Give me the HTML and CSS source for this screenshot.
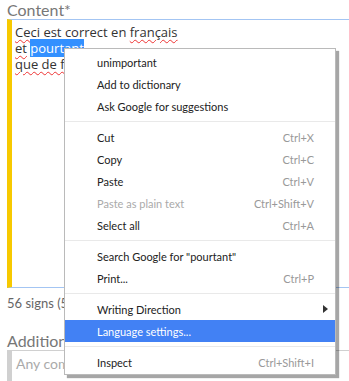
FILE: index.html
```html
<!DOCTYPE html>
<html lang="fr">
<head>
    <meta charset="UTF-8">
    <title>Content</title>
    <link rel="stylesheet" href="styles.css">
</head>
<body>
    <div class="form">
        <div class="field-label">Content*</div>
        <div class="textarea content">
            <div><span class="typo">Ceci</span> est correct en <span class="typo">français</span></div>
            <div><span class="typo">et</span> <span class="selected">pourtant</span></div>
            <div><span class="typo">que de fautes</span></div>
        </div>
        <div class="counter">56 signs (56 characters)</div>
        <div class="field-label">Additional comments</div>
        <div class="textarea comments">
            <span class="placeholder">Any comments</span>
        </div>
    </div>

    <div class="context-menu">
        <div class="item"><span>unimportant</span></div>
        <div class="item"><span>Add to dictionary</span></div>
        <div class="item"><span>Ask Google for suggestions</span></div>
        <div class="separator"></div>
        <div class="item"><span>Cut</span><span class="shortcut">Ctrl+X</span></div>
        <div class="item"><span>Copy</span><span class="shortcut">Ctrl+C</span></div>
        <div class="item"><span>Paste</span><span class="shortcut">Ctrl+V</span></div>
        <div class="item disabled"><span>Paste as plain text</span><span class="shortcut">Ctrl+Shift+V</span></div>
        <div class="item"><span>Select all</span><span class="shortcut">Ctrl+A</span></div>
        <div class="separator"></div>
        <div class="item"><span>Search Google for "pourtant"</span></div>
        <div class="item"><span>Print...</span><span class="shortcut">Ctrl+P</span></div>
        <div class="separator"></div>
        <div class="item"><span>Writing Direction</span><span class="arrow"></span></div>
        <div class="item active"><span>Language settings...</span></div>
        <div class="separator"></div>
        <div class="item"><span>Inspect</span><span class="shortcut">Ctrl+Shift+I</span></div>
    </div>
</body>
</html>
```

FILE: styles.css
```css
body { margin: 0; background-color: #fff; font-family: Lato, "Open Sans", sans-serif; overflow: hidden; }
.form { padding: 0 0 0 7px; }
.field-label { font-size: 16px; line-height: 19px; color: #777; height: 19px; white-space: nowrap; }
.textarea { border: 1px solid #a3c5f3; border-right: none; border-left: 5px solid #f7c900; }
.content { height: 260px; padding: 4px 0 3px 3px; font-family: "Open Sans", sans-serif; font-size: 13px; line-height: 16px; color: #333; }
.typo { text-decoration: underline wavy #e33; text-decoration-thickness: 1px; text-underline-offset: 2px; }
.selected { background-color: #3390ff; color: #fff; }
.counter { margin-top: 7px; font-size: 13px; line-height: 16px; color: #666; }
.counter + .field-label { margin-top: 20px; }
.comments { border-color: #d0d0d0; border-left-color: #d0d0d0; height: 40px; padding: 5px 0 0 4px; font-size: 14px; line-height: 16px; }
.placeholder { color: #aaa; }

/* menu contextuel */
.context-menu { position: absolute; left: 64px; top: 48px; width: 270px; padding: 2px 0 1px; background-color: #fff; border: 1px solid #bababa; box-shadow: 3px 3px 1px rgba(0, 0, 0, 0.35); font-size: 11px; color: #222; }
.item { display: flex; align-items: center; justify-content: space-between; height: 22px; padding: 0 21px 0 32px; white-space: nowrap; }
.shortcut { color: #999; }
.disabled { color: #aaa; }
.active { background-color: #4281f4; color: #fff; }
.separator { height: 1px; margin: 4px 0; background-color: #e9e9e9; }
.arrow { width: 0; height: 0; margin-right: -14px; border-top: 4px solid transparent; border-bottom: 4px solid transparent; border-left: 5px solid #333; }
```
